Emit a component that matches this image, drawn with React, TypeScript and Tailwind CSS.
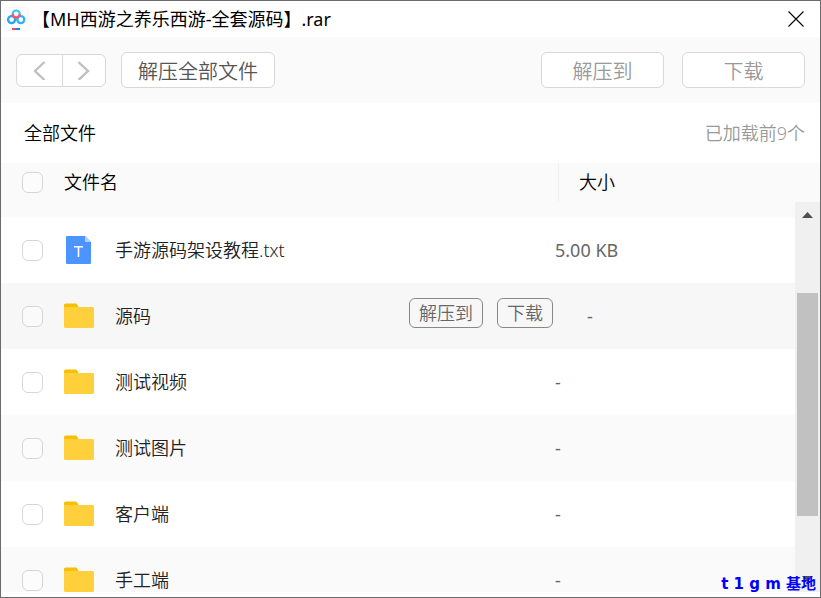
import clsx from "clsx"

type FileItem = {
    name: string
    kind: "folder" | "text"
    size: string
    active?: boolean
}

const files: FileItem[] = [
    { name: "手游源码架设教程.txt", kind: "text", size: "5.00 KB" },
    { name: "源码", kind: "folder", size: "-", active: true },
    { name: "测试视频", kind: "folder", size: "-" },
    { name: "测试图片", kind: "folder", size: "-" },
    { name: "客户端", kind: "folder", size: "-" },
    { name: "手工端", kind: "folder", size: "-" },
]

function Logo() {
    return (
        <svg className="size-6" viewBox="0 0 24 24" fill="none" aria-hidden="true">
            <rect x="0.5" y="0.5" width="23" height="23" rx="3" fill="#fff" stroke="#f6f6f6" />
            <circle cx="7.6" cy="12.6" r="3.5" stroke="#2fa4f5" strokeWidth="2.4" />
            <circle cx="16.8" cy="12.6" r="3.5" stroke="#2fb4fa" strokeWidth="2.4" />
            <path d="M8.700 7a3.500 3.500 0 0 1 7 0" stroke="#3bc4fb" strokeWidth="2.2" />
            <path d="M8.700 7a3.500 3.500 0 0 0 7 0" stroke="#f4566a" strokeWidth="2.4" />
            <path d="M8 22h4" stroke="#f4485e" strokeWidth="2" />
            <path d="M12 22h4" stroke="#2a7bea" strokeWidth="2" />
        </svg>
    )
}

function FolderIcon() {
    return (
        <svg className="w-[30px] h-[26px]" viewBox="0 0 30 26" aria-hidden="true">
            <path d="M0 6V2a1.5 1.5 0 0 1 1.5-1.5h10.300a1.500 1.500 0 0 1 1.300.8L14.500 4v2z" fill="#f7bf05" />
            <path d="M0 4h28.500A1.500 1.500 0 0 1 30 5.500v18a1.500 1.500 0 0 1-1.500 1.500h-27A1.500 1.500 0 0 1 0 23.500z" fill="#ffd03b" />
        </svg>
    )
}

function TextIcon() {
    return (
        <svg className="w-[25px] h-7 ml-0.5" viewBox="0 0 25 28" aria-hidden="true">
            <path d="M1 0h18l6 6v21a1 1 0 0 1-1 1H1a1 1 0 0 1-1-1V1a1 1 0 0 1 1-1z" fill="#4c94ff" />
            <path d="M19 0l6 6h-5a1 1 0 0 1-1-1z" fill="#b0d0ff" />
            <path d="M8 10.800h9M12.500 10.800v10.200" stroke="#fff" strokeWidth="1.600" />
        </svg>
    )
}

function CheckBox({ label }: { label: string }) {
    return (
        <input
            type="checkbox"
            aria-label={label}
            className="block size-[21px] ml-[21px] appearance-none rounded-md border border-[#d6d6d6] bg-white/40 checked:bg-[#4c94ff]"
        />
    )
}

function FileRow({ file, index }: { file: FileItem; index: number }) {
    return (
        <tr
            className={clsx(
                "h-[66px]",
                file.active ? "bg-[#f7f7f7]" : index % 2 ? "bg-[#fafafa]" : "bg-white"
            )}
        >
            <td><CheckBox label={file.name} /></td>
            <td>{file.kind === "folder" ? <FolderIcon /> : <TextIcon />}</td>
            <td>
                <div className="flex items-center justify-between pr-0.5">
                    <span className="text-[#222]">{file.name}</span>
                    {file.active && (
                        <div className="flex gap-3.5 pb-1.5 text-[#666]">
                            <button className="h-[30px] px-[9px] rounded-md border border-[#888]">解压到</button>
                            <button className="h-[30px] px-[9px] rounded-md border border-[#888]">下载</button>
                        </div>
                    )}
                </div>
            </td>
            <td className={clsx("font-normal text-[#666]", file.active && "pl-8")}>{file.size}</td>
        </tr>
    )
}

function ScrollBar() {
    return (
        <div className="flex flex-col w-[25px] shrink-0 mt-[39px] bg-[#f0f0f0]" aria-hidden="true">
            <div className="flex items-center justify-center h-[26px]">
                <svg className="w-[11px] h-1.5" viewBox="0 0 11 6"><path d="M0 6l5.500-6L11 6z" fill="#505050" /></svg>
            </div>
            <div className="grow-[65]" />
            <div className="grow-[223] mx-0.5 bg-[#c1c1c1]" />
            <div className="grow-[50]" />
            <div className="flex items-center justify-center h-[26px]">
                <svg className="w-[11px] h-1.5" viewBox="0 0 11 6"><path d="M0 0l5.500 6L11 0z" fill="#505050" /></svg>
            </div>
        </div>
    )
}

export default function App() {
    return (
        <div
            lang="zh-CN"
            className="relative flex flex-col h-screen overflow-hidden border border-[#6b6b6b] bg-white pb-[5px] font-['Noto_Sans','Noto_Sans_CJK_SC',sans-serif] text-[18px] leading-6 font-[350] text-black"
        >
            <header className="flex items-center h-9 shrink-0 pl-[3px] pr-4">
                <Logo />
                <h1 className="grow pl-1 font-normal">【MH西游之养乐西游-全套源码】.rar</h1>
                <button aria-label="关闭">
                    <svg className="size-4" viewBox="0 0 16 16" aria-hidden="true">
                        <path d="M.5.5l15 15M15.500.5l-15 15" stroke="#000" strokeWidth="1.100" />
                    </svg>
                </button>
            </header>

            <div className="flex items-center h-[66px] shrink-0 px-[15px] bg-[#fafafa] text-[20px]">
                <div className="flex h-[33px] rounded-md border border-[#d8d8d8] bg-white">
                    <button aria-label="后退" className="flex items-center justify-center w-[46px] border-r border-[#d8d8d8]">
                        <svg className="w-3 h-5" viewBox="0 0 12 20" fill="none" aria-hidden="true">
                            <path d="M10.500 2L1 11l9.500 9" stroke="#c0c0c0" strokeWidth="2.400" />
                        </svg>
                    </button>
                    <button aria-label="前进" className="flex items-center justify-center w-[42px]">
                        <svg className="w-3 h-5" viewBox="0 0 12 20" fill="none" aria-hidden="true">
                            <path d="M.5 2l9.500 9-9.500 9" stroke="#c0c0c0" strokeWidth="2.400" />
                        </svg>
                    </button>
                </div>
                <button className="h-9 ml-[15px] px-4 pt-[3px] rounded-md border border-[#d8d8d8] bg-white text-[#555]">解压全部文件</button>
                <div className="flex gap-[18px] ml-auto text-[#999]">
                    <button className="w-[123px] h-9 pt-[3px] rounded-md border border-[#d8d8d8] bg-white">解压到</button>
                    <button className="w-[123px] h-9 pt-[3px] rounded-md border border-[#d8d8d8] bg-white">下载</button>
                </div>
            </div>

            <div className="flex items-center justify-between h-[60px] shrink-0 pl-[23px] pr-[15px]">
                <span>全部文件</span>
                <span className="text-[#999]">已加载前9个</span>
            </div>

            <div className="flex grow min-h-0 bg-[#fafafa]">
                <div className="grow overflow-hidden">
                    <table className="w-full table-fixed text-left">
                        <colgroup>
                            <col className="w-[63px]" />
                            <col className="w-[51px]" />
                            <col />
                            <col className="w-60" />
                        </colgroup>
                        <thead>
                            <tr className="h-[54px] align-top">
                                <th className="pt-[9px]"><CheckBox label="全选" /></th>
                                <th colSpan={2} className="font-[350] leading-[39px]">文件名</th>
                                <th className="font-[350] leading-[39px]">
                                    <div className="ml-[3px] pl-5 border-l border-[#f0f0f0]">大小</div>
                                </th>
                            </tr>
                        </thead>
                        <tbody>
                            {files.map((file, index) => (
                                <FileRow key={file.name} file={file} index={index} />
                            ))}
                        </tbody>
                    </table>
                </div>
                <ScrollBar />
            </div>

            <div className="absolute right-1 bottom-px font-['DejaVu_Sans','Noto_Sans_CJK_SC',sans-serif] text-[15px] font-bold text-[#0000ff]">
                t 1 g m 基地
            </div>
        </div>
    )
}
